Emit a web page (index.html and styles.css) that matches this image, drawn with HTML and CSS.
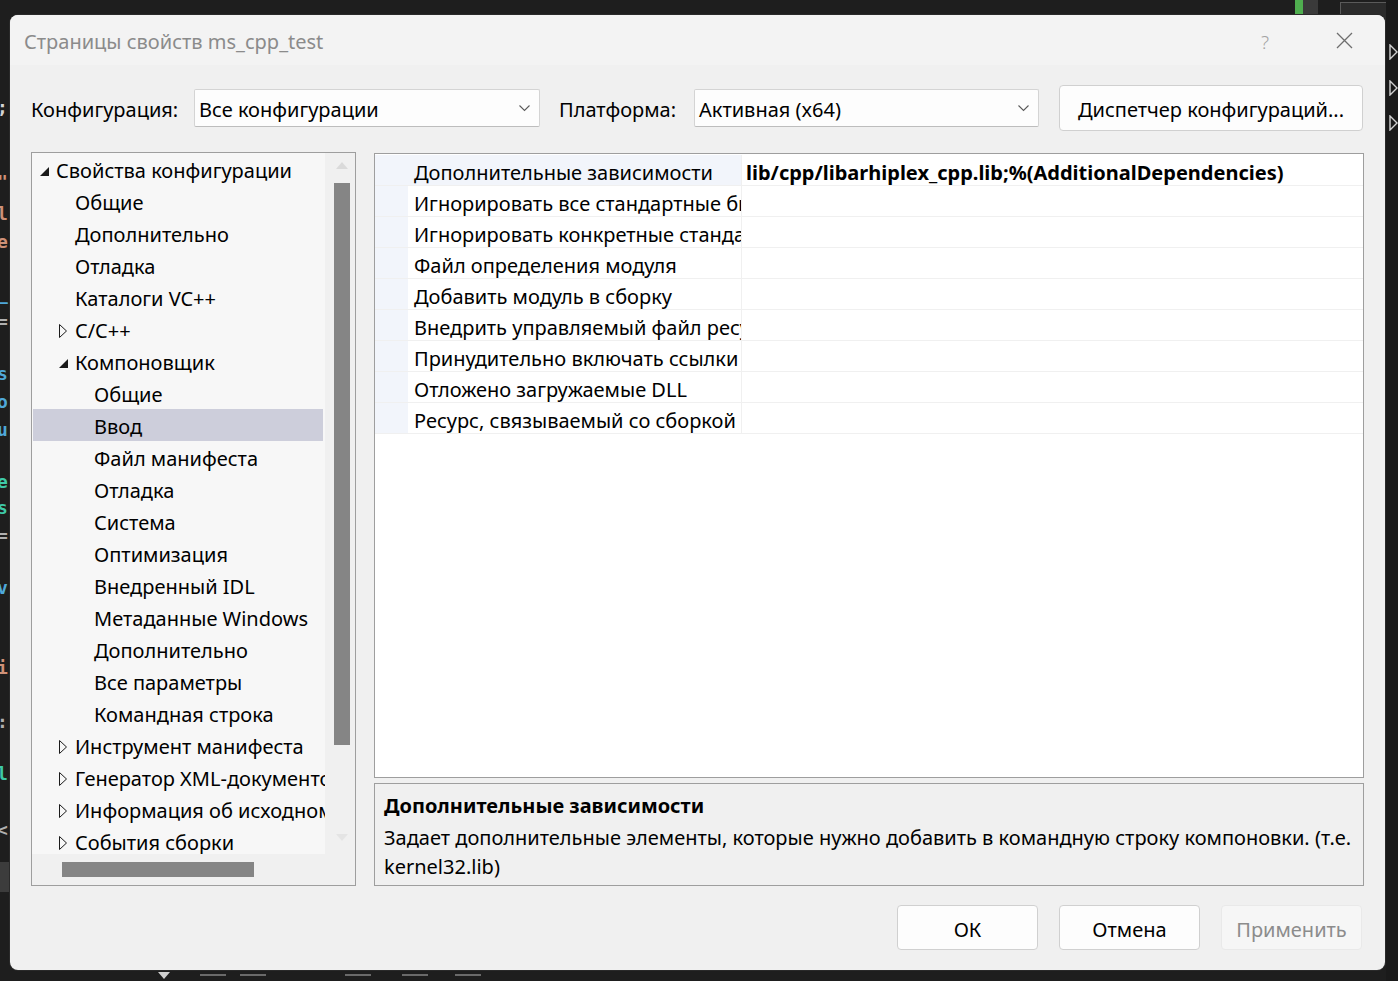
FILE: index.html
```html
<!DOCTYPE html>
<html lang="ru">
<head>
<meta charset="utf-8">
<title>Страницы свойств ms_cpp_test</title>
<link rel="stylesheet" href="styles.css">
</head>
<body>
<div class="desk">
  <div class="bg-green"></div>
  <div class="bg-gray"></div>
  <div class="bg-box"></div>
  <div class="bg-left">
    <span class="c1" style="top:98px">;</span>
    <span class="c2" style="top:172px">"</span>
    <span class="c2" style="top:204px">l</span>
    <span class="c2" style="top:232px">e</span>
    <span class="c3" style="top:284px">_</span>
    <span class="c4" style="top:312px">=</span>
    <span class="c3" style="top:364px">s</span>
    <span class="c3" style="top:392px">o</span>
    <span class="c3" style="top:420px">u</span>
    <span class="c5" style="top:472px">e</span>
    <span class="c5" style="top:498px">s</span>
    <span class="c4" style="top:526px">=</span>
    <span class="c3" style="top:578px">v</span>
    <span class="c2" style="top:658px">i</span>
    <span class="c4" style="top:712px">:</span>
    <span class="c5" style="top:764px">l</span>
    <span class="c4" style="top:820px">&lt;</span>
    <span class="bg-leftblock" style="top:862px"></span>
  </div>
  <div class="bg-right">
    <svg class="tri" style="top:44px" width="9" height="16" viewBox="0 0 9 16"><polygon points="1,1 8,8 1,15" fill="none" stroke="#d0d0d0" stroke-width="1.4"/></svg>
    <svg class="tri" style="top:80px" width="9" height="16" viewBox="0 0 9 16"><polygon points="1,1 8,8 1,15" fill="none" stroke="#d0d0d0" stroke-width="1.4"/></svg>
    <svg class="tri" style="top:115px" width="9" height="16" viewBox="0 0 9 16"><polygon points="1,1 8,8 1,15" fill="none" stroke="#d0d0d0" stroke-width="1.4"/></svg>
  </div>
  <div class="bg-bottom">
    <svg class="bb" style="left:158px" width="12" height="8" viewBox="0 0 12 8"><polygon points="0,0 12,0 6,7" fill="#cfcfcf"/></svg>
    <span class="bbline" style="left:200px"></span>
    <span class="bbline" style="left:240px"></span>
    <span class="bbline" style="left:345px"></span>
    <span class="bbline" style="left:402px"></span>
    <span class="bbline" style="left:455px"></span>
  </div>

  <div class="dialog">
    <div class="titlebar">
      <span class="title">Страницы свойств ms_cpp_test</span>
      <span class="help">?</span>
      <span class="close"><svg width="17" height="17" viewBox="0 0 17 17"><path d="M1 1 L16 16 M16 1 L1 16" stroke="#6e6e6e" stroke-width="1.3" fill="none"/></svg></span>
    </div>
    <div class="body">
      <div class="configrow">
        <span class="lbl lbl1">Конфигурация:</span>
        <div class="select sel1"><span>Все конфигурации</span><svg class="chev" width="11" height="7" viewBox="0 0 11 7"><path d="M0.5 0.5 L5.5 5.5 L10.5 0.5" fill="none" stroke="#5c5c5c" stroke-width="1.1"/></svg></div>
        <span class="lbl lbl2">Платформа:</span>
        <div class="select sel2"><span>Активная (x64)</span><svg class="chev" width="11" height="7" viewBox="0 0 11 7"><path d="M0.5 0.5 L5.5 5.5 L10.5 0.5" fill="none" stroke="#5c5c5c" stroke-width="1.1"/></svg></div>
        <div class="btn mgr">Диспетчер конфигураций...</div>
      </div>

      <div class="main">
        <div class="treebox">
          <div class="tree">
            <div class="row l0"><span class="exp"><svg width="10" height="10" viewBox="0 0 10 10"><polygon points="10,0 10,9 1,9" fill="#1a1a1a"/></svg></span>Свойства конфигурации</div>
            <div class="row l1"><span class="exp"></span>Общие</div>
            <div class="row l1"><span class="exp"></span>Дополнительно</div>
            <div class="row l1"><span class="exp"></span>Отладка</div>
            <div class="row l1"><span class="exp"></span>Каталоги VC++</div>
            <div class="row l1"><span class="exp col"><svg width="10" height="16" viewBox="0 0 10 16"><polygon points="1.5,1.5 8.5,8 1.5,14.5" fill="none" stroke="#1a1a1a" stroke-width="1"/></svg></span>C/C++</div>
            <div class="row l1"><span class="exp"><svg width="10" height="10" viewBox="0 0 10 10"><polygon points="10,0 10,9 1,9" fill="#1a1a1a"/></svg></span>Компоновщик</div>
            <div class="row l2"><span class="exp"></span>Общие</div>
            <div class="row l2 sel"><span class="exp"></span>Ввод</div>
            <div class="row l2"><span class="exp"></span>Файл манифеста</div>
            <div class="row l2"><span class="exp"></span>Отладка</div>
            <div class="row l2"><span class="exp"></span>Система</div>
            <div class="row l2"><span class="exp"></span>Оптимизация</div>
            <div class="row l2"><span class="exp"></span>Внедренный IDL</div>
            <div class="row l2"><span class="exp"></span>Метаданные Windows</div>
            <div class="row l2"><span class="exp"></span>Дополнительно</div>
            <div class="row l2"><span class="exp"></span>Все параметры</div>
            <div class="row l2"><span class="exp"></span>Командная строка</div>
            <div class="row l1"><span class="exp col"><svg width="10" height="16" viewBox="0 0 10 16"><polygon points="1.5,1.5 8.5,8 1.5,14.5" fill="none" stroke="#1a1a1a" stroke-width="1"/></svg></span>Инструмент манифеста</div>
            <div class="row l1"><span class="exp col"><svg width="10" height="16" viewBox="0 0 10 16"><polygon points="1.5,1.5 8.5,8 1.5,14.5" fill="none" stroke="#1a1a1a" stroke-width="1"/></svg></span>Генератор XML-документов</div>
            <div class="row l1"><span class="exp col"><svg width="10" height="16" viewBox="0 0 10 16"><polygon points="1.5,1.5 8.5,8 1.5,14.5" fill="none" stroke="#1a1a1a" stroke-width="1"/></svg></span>Информация об исходном коде</div>
            <div class="row l1"><span class="exp col"><svg width="10" height="16" viewBox="0 0 10 16"><polygon points="1.5,1.5 8.5,8 1.5,14.5" fill="none" stroke="#1a1a1a" stroke-width="1"/></svg></span>События сборки</div>
          </div>
          <div class="vscroll">
            <svg class="arr" width="12" height="7" viewBox="0 0 12 7"><polygon points="6,0 12,7 0,7" fill="#dadada"/></svg>
            <div class="vthumb"></div>
            <svg class="arr arr-down" width="12" height="7" viewBox="0 0 12 7"><polygon points="0,0 12,0 6,7" fill="#e4e4e4"/></svg>
          </div>
          <div class="hscroll"><div class="hthumb"></div></div>
          <div class="corner"></div>
        </div>

        <div class="right">
          <div class="grid">
            <div class="prow first"><span class="gut"></span><span class="pname">Дополнительные зависимости</span><span class="pval">lib/cpp/libarhiplex_cpp.lib;%(AdditionalDependencies)</span></div>
            <div class="prow"><span class="gut"></span><span class="pname">Игнорировать все стандартные библиотеки</span><span class="pval"></span></div>
            <div class="prow"><span class="gut"></span><span class="pname">Игнорировать конкретные стандартные библиотеки</span><span class="pval"></span></div>
            <div class="prow"><span class="gut"></span><span class="pname">Файл определения модуля</span><span class="pval"></span></div>
            <div class="prow"><span class="gut"></span><span class="pname">Добавить модуль в сборку</span><span class="pval"></span></div>
            <div class="prow"><span class="gut"></span><span class="pname">Внедрить управляемый файл ресурсов</span><span class="pval"></span></div>
            <div class="prow"><span class="gut"></span><span class="pname">Принудительно включать ссылки</span><span class="pval"></span></div>
            <div class="prow"><span class="gut"></span><span class="pname">Отложено загружаемые DLL</span><span class="pval"></span></div>
            <div class="prow"><span class="gut"></span><span class="pname">Ресурс, связываемый со сборкой</span><span class="pval"></span></div>
          </div>
          <div class="desc">
            <div class="dtitle">Дополнительные зависимости</div>
            <div class="dtext">Задает дополнительные элементы, которые нужно добавить в командную строку компоновки. (т.е. kernel32.lib)</div>
          </div>
        </div>
      </div>

      <div class="buttons">
        <div class="btn">ОК</div>
        <div class="btn">Отмена</div>
        <div class="btn disabled">Применить</div>
      </div>
    </div>
  </div>
</div>
</body>
</html>
```

FILE: styles.css
```css
* { box-sizing: border-box; }
html, body { margin: 0; padding: 0; }
body {
  width: 1398px;
  height: 981px;
  overflow: hidden;
  background: #1e1e1e;
  font-family: "Noto Sans", "Open Sans", sans-serif;
  color: #000;
}
.desk {
  position: relative;
  width: 1398px;
  height: 981px;
  padding: 15px 13px 11px 10px;
}

/* background (IDE behind the dialog) */
.bg-green { position: absolute; left: 1295px; top: 0; width: 8px; height: 16px; background: #4fae4f; }
.bg-gray { position: absolute; left: 1303px; top: 0; width: 15px; height: 16px; background: #3a3a3a; }
.bg-box { position: absolute; left: 1340px; top: 2px; width: 60px; height: 40px; border: 1px solid #5a5a5a; background: #2b2b2b; }
.bg-left { position: absolute; left: 0; top: 0; width: 10px; height: 981px; overflow: hidden; font-family: "DejaVu Sans Mono", monospace; font-size: 18px; font-weight: bold; }
.bg-left span { position: absolute; left: -3px; line-height: 20px; }
.c1 { color: #d4d4d4; }
.c2 { color: #ce9178; }
.c3 { color: #4fa8d8; }
.c4 { color: #b0b0b0; }
.c5 { color: #3ec9a7; }
.bg-leftblock { width: 12px; height: 30px; background: #3c3c3c; }
.bg-right { position: absolute; left: 1386px; top: 0; width: 12px; height: 981px; background: #1a1a1a; }
.bg-right .tri { position: absolute; left: 3px; }
.bg-bottom { position: absolute; left: 0; top: 970px; width: 1398px; height: 11px; }
.bg-bottom .bb { position: absolute; top: 2px; }
.bbline { position: absolute; top: 4px; width: 26px; height: 2px; background: #6a6a6a; }

/* dialog window */
.dialog {
  position: relative;
  z-index: 1;
  width: 1375px;
  height: 955px;
  background: #f0f0f0;
  border-radius: 8px;
  overflow: hidden;
  display: flex;
  flex-direction: column;
  box-shadow: 0 0 0 1px #2a2a2a;
}
.titlebar {
  height: 50px;
  flex: none;
  background: #f3f3f3;
  display: flex;
  align-items: center;
  padding-left: 14px;
  padding-top: 3px;
}
.title {
  font-size: 20px;
  color: #8b8b8b;
  flex: 1;
}
.help {
  font-size: 19px;
  color: #a3a3a3;
  width: 20px;
  margin-right: 55px;
  font-weight: 300;
}
.close {
  width: 17px;
  height: 17px;
  margin-right: 32px;
  display: flex;
  margin-top: -3px;
}

.body {
  flex: 1;
  padding: 20px 21px 20px 21px;
  display: flex;
  flex-direction: column;
}

.configrow {
  height: 46px;
  display: flex;
  align-items: center;
  font-size: 20px;
}
.lbl { flex: none; padding-top: 2px; }
.lbl1 { width: 163px; }
.lbl2 { width: 135px; margin-left: 19px; }
.select {
  height: 38px;
  background: #fdfdfd;
  border: 1px solid #d4d4d4;
  border-bottom-color: #bdbdbd;
  border-radius: 2px;
  display: flex;
  align-items: center;
  justify-content: space-between;
  padding: 2px 9px 0 4px;
  flex: none;
}
.sel1 { width: 346px; }
.sel2 { width: 345px; }
.chev { flex: none; margin-top: -2px; }

.btn {
  height: 45px;
  border: 1px solid #d0d0d0;
  border-radius: 4px;
  background: #fdfdfd;
  display: flex;
  align-items: center;
  justify-content: center;
  font-size: 20px;
  flex: none;
  padding-top: 3px;
}
.mgr { width: 304px; height: 46px; margin-left: 20px; padding-top: 2px; }

.main {
  margin-top: 21px;
  height: 734px;
  display: flex;
  flex: none;
}

/* tree */
.treebox {
  width: 325px;
  height: 734px;
  border: 1px solid #9e9e9e;
  display: grid;
  grid-template-columns: 293px 30px;
  grid-template-rows: 701px 31px;
  background: #f0f0f0;
  flex: none;
}
.tree {
  background: #f7f7f7;
  overflow: hidden;
  font-size: 20px;
  white-space: nowrap;
}
.row {
  height: 32px;
  display: flex;
  align-items: center;
  padding-top: 3px;
}
.row.l0 { padding-left: 7px; }
.row.l1 { padding-left: 26px; }
.row.l2 { padding-left: 45px; }
.row.sel { background: #cdcedb; margin-right: 2px; margin-left: 1px; padding-left: 44px; }
.exp {
  width: 17px;
  height: 16px;
  flex: none;
  display: flex;
  align-items: flex-end;
  padding-bottom: 2px;
}
.exp.col { align-items: center; padding-bottom: 0; padding-left: 0; }

.vscroll {
  display: flex;
  flex-direction: column;
  align-items: center;
  padding-left: 4px;
}
.arr { margin-top: 9px; flex: none; }
.vthumb {
  margin-top: 14px;
  width: 16px;
  height: 562px;
  background: #858585;
  flex: none;
}
.arr-down { margin-top: 89px; }
.hscroll { padding: 8px 0 0 30px; }
.hthumb { width: 192px; height: 15px; background: #858585; }

/* right side */
.right {
  margin-left: 18px;
  flex: 1;
  display: flex;
  flex-direction: column;
  padding-top: 1px;
}
.grid {
  height: 625px;
  border: 1px solid #9e9e9e;
  background: #fff;
  padding-top: 1px;
  flex: none;
  font-size: 20px;
}
.prow {
  height: 31px;
  display: flex;
  border-bottom: 1px solid #f0f0f0;
}
.gut { width: 33px; background: #f2f5fb; flex: none; }
.pname {
  width: 334px;
  flex: none;
  padding-left: 6px;
  white-space: nowrap;
  overflow-x: clip;
  overflow-y: visible;
  border-right: 1px solid #f0f0f0;
  line-height: 30px;
  padding-top: 3px;
}
.prow.first .pname { background: #f2f5fb; }
.pval {
  flex: 1;
  padding-left: 4px;
  font-weight: bold;
  white-space: nowrap;
  overflow-x: clip;
  overflow-y: visible;
  line-height: 30px;
  padding-top: 3px;
}
.desc {
  margin-top: 5px;
  height: 103px;
  border: 1px solid #9e9e9e;
  background: #f0f0f0;
  padding: 7px 9px 0 9px;
  font-size: 20px;
}
.dtitle { font-weight: bold; line-height: 30px; margin-bottom: 2px; }
.dtext { line-height: 29px; }

.buttons {
  margin-top: 19px;
  display: flex;
  justify-content: flex-end;
  gap: 21px;
  padding-right: 2px;
}
.buttons .btn { width: 141px; }
.btn.disabled {
  color: #8c8c8c;
  background: #f6f6f6;
  border-color: #e9e9e9;
}
```
